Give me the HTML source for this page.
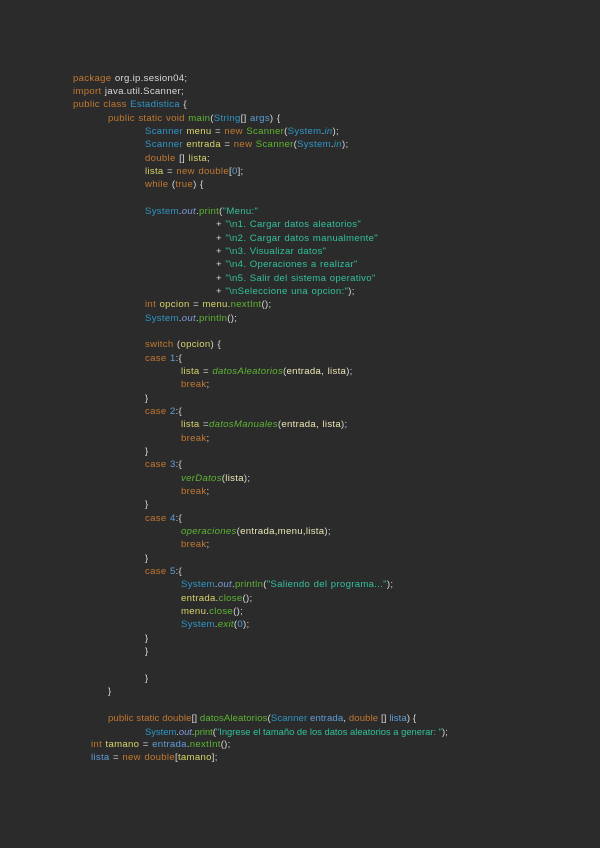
<!DOCTYPE html>
<html><head><meta charset="utf-8"><style>
html,body{margin:0;padding:0;background:#2b2b2b;width:600px;height:848px;overflow:hidden}
.l{position:absolute;white-space:pre;font-family:"Liberation Sans",sans-serif;font-size:9.6px;letter-spacing:0.3px;word-spacing:0.5px;line-height:12px;color:#d8d8d8;margin-top:1px}
.k{color:#c27830}.t{color:#2e96c6}.v{color:#d8d46a}.m{color:#5db532}.s{color:#33c09c}.n{color:#5d9fd6}.o{color:#7e9cdc;font-style:italic}.a{color:#ece6b4}.i{font-style:italic}
</style></head><body>
<div class="l" style="left:73px;top:72px"><span class="k">package</span> org.ip.sesion04;</div>
<div class="l" style="left:73px;top:85px"><span class="k">import</span> java.util.Scanner;</div>
<div class="l" style="left:73px;top:98px"><span class="k">public class</span> <span class="t">Estadistica</span> {</div>
<div class="l" style="left:108px;top:112px"><span class="k">public static void</span> <span class="m">main</span>(<span class="t">String</span>[] <span class="n">args</span>) {</div>
<div class="l" style="left:145px;top:125px"><span class="t">Scanner</span> <span class="v">menu</span> = <span class="k">new</span> <span class="m">Scanner</span>(<span class="t">System</span>.<span class="t i">in</span>);</div>
<div class="l" style="left:145px;top:138px"><span class="t">Scanner</span> <span class="v">entrada</span> = <span class="k">new</span> <span class="m">Scanner</span>(<span class="t">System</span>.<span class="t i">in</span>);</div>
<div class="l" style="left:145px;top:152px"><span class="k">double</span> [] <span class="v">lista</span>;</div>
<div class="l" style="left:145px;top:165px"><span class="v">lista</span> = <span class="k">new double</span>[<span class="n">0</span>];</div>
<div class="l" style="left:145px;top:178px"><span class="k">while</span> (<span class="k">true</span>) {</div>
<div class="l" style="left:145px;top:205px"><span class="t">System</span>.<span class="o">out</span>.<span class="m">print</span>(<span class="s">"Menu:"</span></div>
<div class="l" style="left:216px;top:218px">+ <span class="s">"\n1. Cargar datos aleatorios"</span></div>
<div class="l" style="left:216px;top:232px">+ <span class="s">"\n2. Cargar datos manualmente"</span></div>
<div class="l" style="left:216px;top:245px">+ <span class="s">"\n3. Visualizar datos"</span></div>
<div class="l" style="left:216px;top:258px">+ <span class="s">"\n4. Operaciones a realizar"</span></div>
<div class="l" style="left:216px;top:272px">+ <span class="s">"\n5. Salir del sistema operativo"</span></div>
<div class="l" style="left:216px;top:285px">+ <span class="s">"\nSeleccione una opcion:"</span>);</div>
<div class="l" style="left:145px;top:298px"><span class="k">int</span> <span class="v">opcion</span> = <span class="v">menu</span>.<span class="m">nextInt</span>();</div>
<div class="l" style="left:145px;top:312px"><span class="t">System</span>.<span class="o">out</span>.<span class="m">println</span>();</div>
<div class="l" style="left:145px;top:338px"><span class="k">switch</span> (<span class="v">opcion</span>) {</div>
<div class="l" style="left:145px;top:352px"><span class="k">case</span> <span class="n">1</span>:{</div>
<div class="l" style="left:181px;top:365px"><span class="v">lista</span> = <span class="m i">datosAleatorios</span>(<span class="a">entrada, lista</span>);</div>
<div class="l" style="left:181px;top:378px"><span class="k">break</span>;</div>
<div class="l" style="left:145px;top:392px">}</div>
<div class="l" style="left:145px;top:405px"><span class="k">case</span> <span class="n">2</span>:{</div>
<div class="l" style="left:181px;top:418px"><span class="v">lista</span> =<span class="m i">datosManuales</span>(<span class="a">entrada, lista</span>);</div>
<div class="l" style="left:181px;top:432px"><span class="k">break</span>;</div>
<div class="l" style="left:145px;top:445px">}</div>
<div class="l" style="left:145px;top:458px"><span class="k">case</span> <span class="n">3</span>:{</div>
<div class="l" style="left:181px;top:472px"><span class="m i">verDatos</span>(<span class="a">lista</span>);</div>
<div class="l" style="left:181px;top:485px"><span class="k">break</span>;</div>
<div class="l" style="left:145px;top:498px">}</div>
<div class="l" style="left:145px;top:512px"><span class="k">case</span> <span class="n">4</span>:{</div>
<div class="l" style="left:181px;top:525px"><span class="m i">operaciones</span>(<span class="a">entrada,menu,lista</span>);</div>
<div class="l" style="left:181px;top:538px"><span class="k">break</span>;</div>
<div class="l" style="left:145px;top:552px">}</div>
<div class="l" style="left:145px;top:565px"><span class="k">case</span> <span class="n">5</span>:{</div>
<div class="l" style="left:181px;top:578px"><span class="t">System</span>.<span class="o">out</span>.<span class="m">println</span>(<span class="s">"Saliendo del programa..."</span>);</div>
<div class="l" style="left:181px;top:592px"><span class="v">entrada</span>.<span class="m">close</span>();</div>
<div class="l" style="left:181px;top:605px"><span class="v">menu</span>.<span class="m">close</span>();</div>
<div class="l" style="left:181px;top:618px"><span class="t">System</span>.<span class="m i">exit</span>(<span class="n">0</span>);</div>
<div class="l" style="left:145px;top:632px">}</div>
<div class="l" style="left:145px;top:645px">}</div>
<div class="l" style="left:145px;top:672px">}</div>
<div class="l" style="left:108px;top:685px">}</div>
<div class="l" style="left:108px;top:712px;letter-spacing:0.1px;word-spacing:0"><span class="k">public static double</span>[] <span class="m">datosAleatorios</span>(<span class="t">Scanner</span> <span class="n">entrada</span>, <span class="k">double</span> [] <span class="n">lista</span>) {</div>
<div class="l" style="left:145px;top:725px;letter-spacing:0;word-spacing:0;font-size:9.4px"><span class="t">System</span>.<span class="o">out</span>.<span class="m">print</span>(<span class="s">"Ingrese el tamaño de los datos aleatorios a generar: "</span>);</div>
<div class="l" style="left:91px;top:738px"><span class="k">int</span> <span class="v">tamano</span> = <span class="n">entrada</span>.<span class="m">nextInt</span>();</div>
<div class="l" style="left:91px;top:751px"><span class="n">lista</span> = <span class="k">new double</span>[<span class="v">tamano</span>];</div>
</body></html>
